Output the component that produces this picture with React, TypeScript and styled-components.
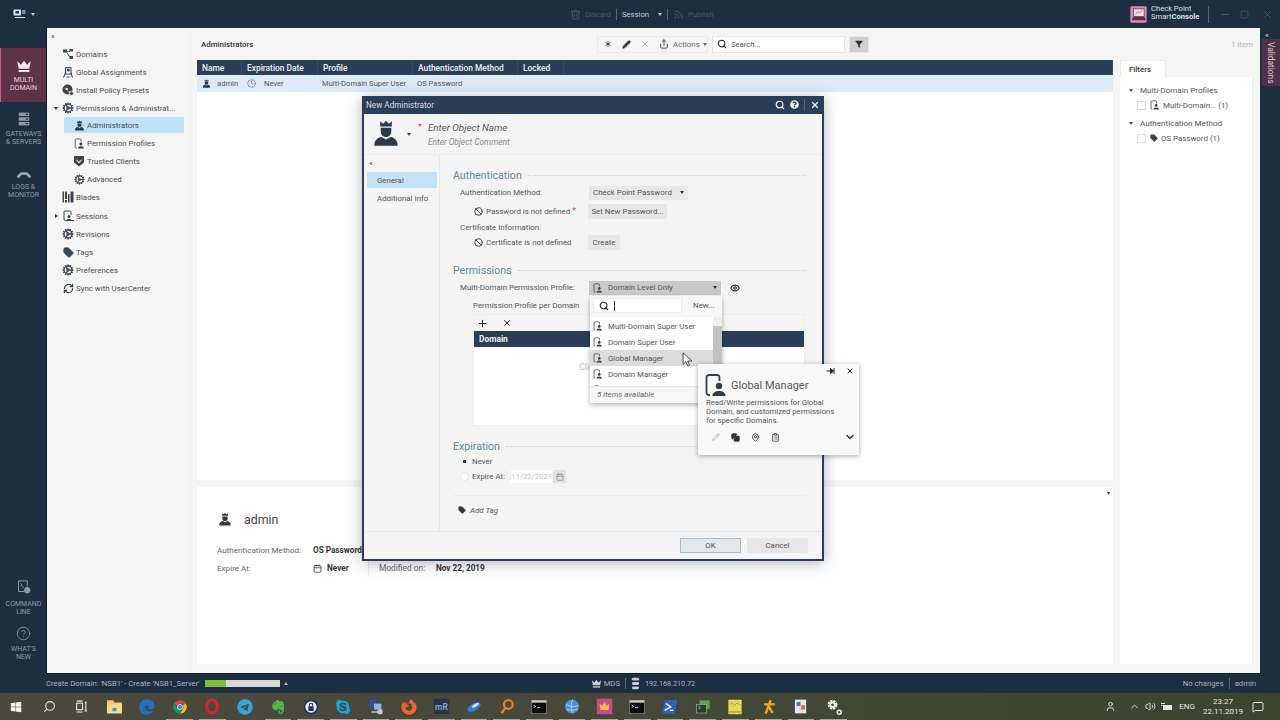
import React from "react";
import styled, { createGlobalStyle } from "styled-components";
import {
  Asterisk,
  Ban,
  Calendar,
  ChevronDown,
  ChevronUp,
  CircleHelp,
  ClipboardList,
  Clock,
  Cog,
  Copy,
  Eye,
  Filter,
  MapPin,
  MessageSquare,
  Minus,
  Pencil,
  Plus,
  RefreshCw,
  Rss,
  Search,
  Share,
  Square,
  Tag,
  Trash2,
  User,
  Volume2,
  X,
} from "lucide-react";
import {
  FaEdge,
  FaEvernote,
  FaFirefoxBrowser,
  FaQuestionCircle,
  FaSkype,
  FaTelegram,
  FaWindows,
} from "react-icons/fa";

const NAVY = "#1d2e40";
const HEADER = "#2b3e58";
const TEXT = "#4c4c4c";

const GlobalStyle = createGlobalStyle`
  html, body {
    margin: 0;
    padding: 0;
    background: ${NAVY};
  }
  * {
    box-sizing: border-box;
  }
`;

/* ---- drawn icons ---- */

type IconProps = { size?: number; color?: string };

const AdminIcon = ({ size = 12, color = "#2c3a48" }: IconProps) => (
  <svg width={size} height={size} viewBox="0 0 24 24" fill={color}>
    <path d="M7 2l2.5 2L12 1.5 14.5 4 17 2v4.5H7z" />
    <path d="M7.5 7.5h9V11a4.5 4.5 0 0 1-9 0z" />
    <path d="M2 23c0-5 3-7 6-7.5l4 2 4-2c3 .5 6 2.5 6 7.5z" />
  </svg>
);

const ProfileIcon = ({ size = 12, color = "#333f4b" }: IconProps) => (
  <svg width={size} height={size} viewBox="0 0 24 24" fill="none">
    <path d="M6 22H5A2.5 2.5 0 0 1 2.5 19.5v-15A2.5 2.5 0 0 1 5 2h8A2.5 2.5 0 0 1 15.5 4.5V8" stroke={color} strokeWidth="1.8" />
    <circle cx="15" cy="13" r="3.2" fill={color} />
    <path d="M8.5 23c0-3.4 2.6-5 6.5-5s6.5 1.6 6.5 5z" fill={color} />
  </svg>
);

const DomainsIcon = () => (
  <svg width="12" height="12" viewBox="0 0 24 24" fill="#3a4552">
    <rect x="2" y="3" width="8" height="6" />
    <rect x="15" y="2" width="7" height="5" />
    <rect x="15" y="16" width="7" height="6" />
    <path d="M9 6l7 0v1.6L9 7.6zM10 8l6 9-1.4 1L8.6 9z" />
  </svg>
);

const AssignIcon = () => (
  <svg width="12" height="13" viewBox="0 0 24 24" fill="none" stroke="#3a4552" strokeWidth="2.2">
    <rect x="7" y="2" width="11" height="13" rx="1" />
    <circle cx="12.5" cy="7" r="2" fill="#3a4552" />
    <path d="M7 13L3 22M18 13l3 9M9 21h6" />
  </svg>
);

const PolicyIcon = () => (
  <svg width="12" height="12" viewBox="0 0 24 24" fill="#3a4552">
    <circle cx="11" cy="11" r="10" />
    <path d="M7 7l5 2-1 4-4-2zM13 14l3 1-2 4z" fill="#f5f5f5" />
    <rect x="15" y="15" width="8" height="8" rx="4" stroke="#f5f5f5" strokeWidth="1.5" />
  </svg>
);

const BladesIcon = () => (
  <svg width="12" height="12" viewBox="0 0 24 24" fill="#3a4552">
    <rect x="1" y="1" width="3" height="22" />
    <rect x="6" y="1" width="4" height="15" />
    <rect x="6" y="18" width="4" height="5" />
    <rect x="12" y="6" width="3" height="17" />
    <rect x="17" y="1" width="6" height="22" />
  </svg>
);

const SessionsIcon = () => (
  <svg width="12" height="12" viewBox="0 0 24 24" fill="none">
    <path d="M6 20H4V4a2 2 0 0 1 2-2h10a2 2 0 0 1 2 2v6" stroke="#3a4552" strokeWidth="2" />
    <circle cx="14" cy="13" r="3" fill="#3a4552" />
    <path d="M6 22h18v-2h-5l-2-2h-6l-2 2H6z" fill="#3a4552" />
  </svg>
);

const ShieldIcon = () => (
  <svg width="12" height="12" viewBox="0 0 24 24" fill="#3a4552">
    <path d="M2 2h20v13l-10 8L2 15z" />
    <path d="M7 8l5 6 5-6v3l-5 6-5-6z" fill="#f5f5f5" />
  </svg>
);

const CrownIcon = ({ size = 16, color = "#f2e4ea" }: IconProps) => (
  <svg width={size} height={size} viewBox="0 0 24 24" fill={color}>
    <path d="M2 5l5.5 5L12 4l4.5 6L22 5l-2 11H4z" />
    <rect x="4" y="18" width="16" height="3" />
  </svg>
);

const ServersIcon = () => (
  <svg width="14" height="14" viewBox="0 0 24 24" fill="#8d99a5">
    <rect x="3" y="1" width="18" height="6" />
    <rect x="3" y="9" width="18" height="6" />
    <rect x="3" y="17" width="18" height="6" />
    <rect x="15" y="3" width="4" height="2" fill={NAVY} />
    <rect x="15" y="11" width="4" height="2" fill={NAVY} />
    <rect x="15" y="19" width="4" height="2" fill={NAVY} />
  </svg>
);

const GaugeIcon = () => (
  <svg width="16" height="12" viewBox="0 0 24 16" fill="none">
    <path d="M3 15a9.5 9.5 0 0 1 18 0" stroke="#9aa6b1" strokeWidth="4" />
  </svg>
);

const TerminalIcon = () => (
  <svg width="15" height="15" viewBox="0 0 24 24" fill="none" stroke="#8d99a5" strokeWidth="1.6">
    <path d="M13 20H4V3h14v9" />
    <path d="M7 7l3 2.5L7 12M10 13h3" />
    <circle cx="18" cy="18" r="4.5" fill="#8d99a5" />
  </svg>
);

const DbIcon = () => (
  <svg width="9" height="13" viewBox="0 0 12 18" fill="#c4ccd3">
    <rect x="1" y="1" width="10" height="4" rx="2" />
    <rect x="1" y="7" width="10" height="4" rx="2" />
    <rect x="1" y="13" width="10" height="4" rx="2" />
  </svg>
);

const LogoIcon = () => (
  <svg width="17" height="17" viewBox="0 0 24 24">
    <rect x="0.5" y="0.5" width="23" height="23" rx="2" fill="#d989b5" />
    <rect x="5" y="4" width="15" height="11" fill="#f6dce9" stroke="#5b2f4c" />
    <path d="M2 20l3-5h15l3 5z" fill="#5b2f4c" />
    <path d="M8 12l3-4 3 2 3-4" stroke="#b15a8d" fill="none" />
  </svg>
);

const DesktopIcon = () => (
  <svg width="13" height="12" viewBox="0 0 26 24" fill="#dfe5ea">
    <rect x="1" y="3" width="15" height="12" rx="1.5" />
    <rect x="5" y="6" width="7" height="5" fill={NAVY} />
    <rect x="18" y="5" width="7" height="2" />
    <rect x="18" y="9" width="7" height="2" />
    <rect x="4" y="18" width="20" height="2" />
  </svg>
);

const CursorIcon = () => (
  <svg width="11" height="15" viewBox="0 0 12 17">
    <path d="M1 1v13l3.2-3 2.2 5 2-1-2.2-4.8H11z" fill="#fff" stroke="#222" strokeWidth="0.9" />
  </svg>
);

const PinSideIcon = () => (
  <svg width="9" height="8" viewBox="0 0 18 16" fill="none" stroke="#222" strokeWidth="2">
    <path d="M1 8h8M16 2v12" />
    <path d="M9 3l6 5-6 5z" fill="#222" />
  </svg>
);

const NetTrayIcon = () => (
  <svg width="11" height="10" viewBox="0 0 22 20" fill="#e6e6e0">
    <rect x="4" y="6" width="18" height="10" />
    <rect x="0" y="2" width="8" height="2" />
    <rect x="0" y="6" width="3" height="2" />
  </svg>
);

const ChromeIcon = () => (
  <svg width="16" height="16" viewBox="0 0 24 24">
    <path d="M12 2a10 10 0 0 1 8.7 5H12a5 5 0 0 0-4.6 3L3.8 6A10 10 0 0 1 12 2z" fill="#db4437" />
    <path d="M20.7 7A10 10 0 0 1 12 22l4.3-7.5A5 5 0 0 0 16.4 9z" fill="#f4c20d" />
    <path d="M12 22A10 10 0 0 1 3.8 6l4.3 7.6a5 5 0 0 0 5.4 3z" fill="#0f9d58" />
    <circle cx="12" cy="12" r="4" fill="#4285f4" stroke="#fff" />
  </svg>
);

const OperaIcon = () => (
  <svg width="16" height="17" viewBox="0 0 24 24" fill="none">
    <ellipse cx="12" cy="12" rx="8" ry="10" stroke="#d4262c" strokeWidth="5" />
  </svg>
);

const LockAppIcon = () => (
  <svg width="16" height="16" viewBox="0 0 24 24">
    <circle cx="12" cy="12" r="11" fill="#1d2f66" />
    <circle cx="12" cy="12" r="8.5" fill="#e6e8f2" />
    <rect x="8" y="11" width="8" height="7" rx="1" fill="#1d2f66" />
    <path d="M9.5 11V9a2.5 2.5 0 0 1 5 0v2" stroke="#1d2f66" strokeWidth="1.6" fill="none" />
  </svg>
);

const NetAppIcon = () => (
  <svg width="16" height="16" viewBox="0 0 24 24">
    <rect x="3" y="1" width="9" height="11" fill="#2d4fb8" />
    <rect x="9" y="7" width="11" height="9" fill="#8fb3e6" />
    <rect x="5" y="18" width="14" height="3" fill="#9aa3ad" />
    <circle cx="18" cy="19" r="4" fill="#c5ccd3" />
  </svg>
);

const MrIcon = () => (
  <svg width="17" height="17" viewBox="0 0 24 24">
    <rect x="1" y="1" width="22" height="22" fill="#2b3446" />
    <text x="12" y="16.5" fontSize="12" fontFamily="Roboto" fontWeight="700" fill="#7ea3c9" textAnchor="middle">mR</text>
  </svg>
);

const BlueSwooshIcon = () => (
  <svg width="16" height="16" viewBox="0 0 24 24">
    <ellipse cx="12" cy="12" rx="11" ry="5.5" transform="rotate(-30 12 12)" fill="#2d7fd8" />
    <ellipse cx="14" cy="9.5" rx="6" ry="2" transform="rotate(-30 14 9.5)" fill="#d8ecfb" />
  </svg>
);

const OrangeSearchIcon = () => (
  <svg width="16" height="17" viewBox="0 0 24 24" fill="none" stroke="#e9851d" strokeWidth="3.4">
    <circle cx="14" cy="9" r="6.5" />
    <path d="M9.5 14L4 22" />
  </svg>
);

const ConsoleIcon = () => (
  <svg width="16" height="16" viewBox="0 0 24 24">
    <rect x="1" y="2" width="22" height="20" fill="#0c0c0c" stroke="#8a8a8a" />
    <rect x="1" y="2" width="22" height="3.5" fill="#cfcfcf" />
    <path d="M4 9l3 2-3 2M9 13h5" stroke="#e6e6e6" strokeWidth="1.3" fill="none" />
  </svg>
);

const GlobeAppIcon = () => (
  <svg width="16" height="17" viewBox="0 0 24 24" fill="none">
    <circle cx="12" cy="12" r="10.5" fill="#4d8ed6" />
    <path d="M3 9c5 3 11 4 18 2M4 16c5 2 10 2 16 0M13 2c-3 5-3 13 0 20" stroke="#bcdcf7" strokeWidth="1.3" />
  </svg>
);

const SmartConsoleIcon = () => (
  <svg width="17" height="17" viewBox="0 0 24 24">
    <rect x="1" y="1" width="22" height="22" fill="#c94d85" />
    <path d="M5 8l4 3 3-5 3 5 4-3-1.5 9h-11z" fill="#f2c14a" />
  </svg>
);

const PowerShellIcon = () => (
  <svg width="16" height="16" viewBox="0 0 24 24">
    <path d="M4 2h19l-4 20H0z" fill="#2a66c0" />
    <path d="M6 7l7 5-9 5M12 17h5" stroke="#fff" strokeWidth="2" fill="none" />
  </svg>
);

const RemoteIcon = () => (
  <svg width="16" height="16" viewBox="0 0 24 24">
    <rect x="7" y="2" width="15" height="13" fill="#5f9e4c" />
    <rect x="2" y="8" width="15" height="13" fill="#2d3a33" stroke="#9ac48a" />
    <path d="M5 11l3 2-3 2" stroke="#e5e5e5" fill="none" />
  </svg>
);

const NoteIcon = () => (
  <svg width="16" height="18" viewBox="0 0 24 24">
    <rect x="2" y="1" width="20" height="22" rx="1" fill="#e6d95c" />
    <path d="M4 9l3-3 4 4 4-4 5 3" stroke="#8a7f20" fill="none" />
    <rect x="2" y="18" width="20" height="3" fill="#bfb13a" />
  </svg>
);

const RunnerIcon = () => (
  <svg width="17" height="17" viewBox="0 0 24 24" fill="none" stroke="#f0a81e" strokeWidth="3.5">
    <path d="M6 9h15M15 3L8 22M12 12l6 9" />
  </svg>
);

const DocIcon = () => (
  <svg width="15" height="17" viewBox="0 0 24 24">
    <rect x="3" y="1" width="18" height="22" fill="#dfe6f2" />
    <rect x="6" y="5" width="6" height="6" fill="#3f6fc0" />
    <rect x="13" y="10" width="6" height="7" fill="#d56a3b" />
  </svg>
);

const GearsIcon = () => (
  <svg width="18" height="18" viewBox="0 0 24 24" fill="none" stroke="#eef0ea">
    <circle cx="10" cy="9" r="5" strokeWidth="3.2" strokeDasharray="3 1" />
    <circle cx="10" cy="9" r="3" strokeWidth="2.4" />
    <circle cx="19" cy="19" r="2.7" strokeWidth="2" />
  </svg>
);

const FolderIcon = () => (
  <svg width="17" height="15" viewBox="0 0 24 22">
    <path d="M1 2h9l2 3h11v16H1z" fill="#f2cd5c" />
    <rect x="1" y="8" width="22" height="13" fill="#f7dc8b" />
    <rect x="9" y="13" width="6" height="5" fill="#3f9bd9" />
  </svg>
);

const TaskViewIcon = () => (
  <svg width="13" height="13" viewBox="0 0 24 24" fill="none" stroke="#e6e6e0" strokeWidth="2">
    <rect x="3" y="6" width="11" height="12" />
    <path d="M3 2h11M3 22h11M20 4v16M18 4h4M18 20h4" />
  </svg>
);

/* ---- page shell ---- */

const Shell = styled.div`
  position: relative;
  width: 1280px;
  height: 720px;
  overflow: hidden;
  display: grid;
  grid-template-columns: 46px 1214px 20px;
  grid-template-rows: 28px 646px 19px 27px;
  background: ${NAVY};
  font-family: Roboto, "Open Sans", sans-serif;
  font-size: 7.9px;
  color: ${TEXT};
`;

const TopBar = styled.header`
  grid-column: 1 / -1;
  display: flex;
  align-items: center;
  padding: 0 7px 0 13px;
  color: #c4ccd3;
`;

const MenuCaret = styled.span<{ $gap?: number }>`
  width: 0;
  height: 0;
  margin-left: ${({ $gap }) => $gap ?? 4}px;
  border-left: 2.5px solid transparent;
  border-right: 2.5px solid transparent;
  border-top: 3px solid currentColor;
`;

const ActionGroup = styled.div`
  display: flex;
  align-items: center;
  margin-left: 535px;
  height: 100%;
`;

const ActionItem = styled.span<{ $dim?: boolean }>`
  display: flex;
  align-items: center;
  gap: 4px;
  color: ${({ $dim }) => ($dim ? "#46586a" : "#c3cbd2")};
  font-size: 7.7px;
`;

const BarDivider = styled.span<{ $h?: number; $mx?: number }>`
  width: 1px;
  height: ${({ $h }) => $h ?? 11}px;
  margin: 0 ${({ $mx }) => $mx ?? 6}px;
  background: #55677a;
`;

const Brand = styled.div`
  display: flex;
  align-items: center;
  margin-left: auto;
`;

const BrandName = styled.div`
  display: flex;
  flex-direction: column;
  margin: -2px 0 0 4px;
  color: #dbe1e6;
  line-height: 8px;
  width: 56px;
`;

const BrandLine = styled.span`
  white-space: nowrap;
  font-size: 7.6px;
  line-height: 8px;
  b {
    font-weight: 700;
  }
`;

const WindowButtons = styled.div`
  display: flex;
  align-items: center;
  gap: 9px;
  margin-left: 10px;
  color: #4a5c6e;
`;

const CloseSlot = styled.span`
  display: flex;
  margin-left: 4px;
`;

/* ---- left navigation ---- */

const SideNav = styled.nav`
  display: flex;
  flex-direction: column;
  padding: 20px 0 13px;
`;

const NavItem = styled.div<{ $active?: boolean; $h?: number; $pt?: number; $gap?: number }>`
  height: ${({ $h }) => $h ?? 53}px;
  display: flex;
  flex-direction: column;
  align-items: center;
  padding-top: ${({ $pt }) => $pt ?? 10}px;
  gap: ${({ $gap }) => $gap ?? 4}px;
  background: ${({ $active }) => ($active ? "#5e3249" : "transparent")};
  border-left: 1px solid ${({ $active }) => ($active ? "#c2668f" : "transparent")};
`;

const NavLabel = styled.span<{ $active?: boolean }>`
  font-size: 7px;
  line-height: 8px;
  text-align: center;
  text-transform: uppercase;
  color: ${({ $active }) => ($active ? "#e6d8df" : "#8f9ba6")};
`;

const NavFoot = styled.div`
  margin-top: auto;
  display: flex;
  flex-direction: column;
`;

/* ---- workspace ---- */

const Workspace = styled.main`
  display: grid;
  grid-template-columns: 144px 929px 1fr;
  grid-template-rows: 1fr;
  background: #f5f5f5;
  border: 1px solid #0e1a26;
  border-top: 0;
  border-right: 0;
`;

const Tree = styled.aside`
  display: flex;
  flex-direction: column;
  border-right: 1px solid #efefef;
`;

const CollapseMark = styled.div<{ $pad?: number; $h?: number; $color?: string }>`
  height: ${({ $h }) => $h ?? 17}px;
  padding-left: ${({ $pad }) => $pad ?? 4}px;
  font-size: 8px;
  line-height: ${({ $h }) => $h ?? 17}px;
  color: ${({ $color }) => $color ?? "#444"};
`;

const TreeRow = styled.div<{ $child?: boolean; $selected?: boolean; $mt?: number }>`
  display: flex;
  align-items: center;
  margin-left: ${({ $child }) => ($child ? 17 : 5)}px;
  width: ${({ $child }) => ($child ? "120px" : "auto")};
  padding-left: ${({ $child }) => ($child ? 9 : 0)}px;
  gap: 2px;
  white-space: nowrap;
  background: ${({ $selected }) => ($selected ? "#bfe1f7" : "transparent")};
  color: ${TEXT};
  height: ${({ $selected }) => ($selected ? 16 : 18)}px;
  margin-top: ${({ $mt }) => $mt ?? 0}px;
  margin-bottom: ${({ $selected }) => ($selected ? 1 : 0)}px;
`;

const CaretSlot = styled.span`
  width: 8px;
  display: flex;
  justify-content: center;
  color: #333;
`;

const SideCaret = styled.span`
  width: 0;
  height: 0;
  border-top: 2.5px solid transparent;
  border-bottom: 2.5px solid transparent;
  border-left: 3px solid #333;
`;

const IconSlot = styled.span`
  width: 12px;
  display: flex;
  justify-content: center;
  align-items: center;
  color: #3a4552;
`;

const Center = styled.section`
  display: flex;
  flex-direction: column;
  padding: 0 7px 9px 6px;
`;

const TitleRow = styled.div`
  height: 32px;
  flex: none;
  display: flex;
  align-items: center;
  gap: 4px;
`;

const PageTitle = styled.h1`
  width: 396px;
  margin: 0;
  padding-left: 4px;
  font-size: 7.9px;
  font-weight: 500;
  color: #333;
`;

const ToolGroup = styled.div`
  width: 111px;
  height: 17px;
  display: flex;
  align-items: center;
  gap: 9px;
  padding-left: 5px;
  border: 1px solid #eaeaea;
  color: #333;
`;

const ActionsLabel = styled.span`
  display: flex;
  align-items: center;
  margin-left: -5px;
  color: #666;
`;

const SearchBox = styled.div`
  width: 133px;
  height: 17px;
  display: flex;
  align-items: center;
  gap: 4px;
  padding-left: 4px;
  background: #fff;
  border: 1px solid #e6e6e6;
  font-style: italic;
  color: #555;
`;

const FilterButton = styled.div`
  width: 20px;
  height: 17px;
  display: flex;
  align-items: center;
  justify-content: center;
  border: 1px solid #e9e9e9;
  background: #cdcfd0;
  color: #333;
`;

const TablePane = styled.div`
  height: 420px;
  flex: none;
  display: flex;
  flex-direction: column;
  background: #fff;
`;

const HeaderRow = styled.div`
  height: 15px;
  flex: none;
  display: grid;
  grid-template-columns: 45px 76px 95px 105px 46px 1fr;
  background: ${HEADER};
`;

const HeaderCell = styled.div`
  display: flex;
  align-items: center;
  padding-left: 5px;
  color: #eef1f4;
  font-size: 8.4px;
  font-weight: 500;
  border-right: 1px solid #36496a;
  white-space: nowrap;
`;

const DataRow = styled.div`
  height: 17px;
  flex: none;
  display: grid;
  grid-template-columns: 45px 76px 95px 105px 46px 1fr;
  background: #dcebf7;
  font-size: 7.6px;
`;

const DataCell = styled.div<{ $pad?: number; $gap?: number }>`
  display: flex;
  align-items: center;
  gap: ${({ $gap }) => $gap ?? 6}px;
  padding-left: ${({ $pad }) => $pad ?? 5}px;
  white-space: nowrap;
  color: #555;
`;

const DetailPane = styled.div`
  flex: 1;
  margin-top: 7px;
  padding: 22px 0 0 20px;
  background: #fff;
  position: relative;
`;

const PaneMenu = styled.span`
  position: absolute;
  top: 2px;
  right: 3px;
  font-size: 6px;
  color: #333;
`;

const DetailHead = styled.div`
  display: flex;
  align-items: center;
  gap: 12px;
  padding-left: 1px;
  height: 20px;
  font-size: 12.4px;
  color: #444;
`;

const DetailGrid = styled.div`
  display: grid;
  grid-template-columns: 96px 55px 68px auto;
  grid-auto-rows: 18px;
  margin-top: 12px;
  align-items: center;
  justify-content: start;
  font-size: 8.1px;
`;

const DetailValue = styled.span`
  display: flex;
  align-items: center;
  gap: 5px;
  font-size: 8.2px;
  font-weight: 700;
  color: #333;
  white-space: nowrap;
`;

const DetailMuted = styled.span<{ $sep?: boolean }>`
  color: #666;
  white-space: nowrap;
  height: 100%;
  display: flex;
  align-items: center;
  ${({ $sep }) => ($sep ? "border-left: 1px solid #eee; padding-left: 10px; font-size: 8.4px;" : "")}
`;

const FilterSide = styled.aside`
  display: flex;
  flex-direction: column;
  padding-right: 7px;
`;

const ItemCount = styled.div`
  height: 32px;
  flex: none;
  display: flex;
  align-items: center;
  justify-content: flex-end;
  color: #b4b4b4;
`;

const FilterTab = styled.div`
  width: 46px;
  height: 17px;
  display: flex;
  align-items: center;
  padding-left: 8px;
  background: #fff;
  border: 1px solid #eaeaea;
  border-bottom: 0;
  font-weight: 500;
  color: #333;
`;

const FilterBody = styled.div`
  flex: 1;
  margin-bottom: 9px;
  padding-top: 5px;
  background: #fff;
  border-right: 1px solid #eee;
`;

const FilterGroup = styled.div`
  height: 16px;
  display: flex;
  align-items: center;
  padding-left: 9px;
  gap: 7px;
  font-size: 8.1px;
  color: #555;
  white-space: nowrap;
`;

const FilterItem = styled.div`
  height: 14px;
  display: flex;
  align-items: center;
  gap: 3px;
  padding-left: 17px;
  margin-bottom: 3px;
  color: #555;
  white-space: nowrap;
`;

const Check = styled.span`
  width: 9px;
  height: 9px;
  margin-right: 1px;
  background: #fff;
  border: 1px solid #dcdcdc;
`;

const RightStrip = styled.aside`
  display: flex;
  flex-direction: column;
  padding-left: 2px;
`;

const ValidationTab = styled.div`
  width: 18px;
  height: 47px;
  margin-top: -5px;
  display: flex;
  align-items: center;
  justify-content: center;
  writing-mode: vertical-rl;
  background: #4f3149;
  color: #d4c8d0;
  font-size: 8.4px;
`;

/* ---- status bar ---- */

const StatusBar = styled.footer`
  grid-column: 1 / -1;
  display: flex;
  align-items: center;
  padding: 0 24px 0 46px;
  color: #a8b3bc;
  font-size: 7.7px;
  white-space: nowrap;
`;

const Progress = styled.div`
  width: 75px;
  height: 7px;
  margin-left: 5px;
  background: #d8d8d8;
`;

const ProgressFill = styled.div`
  height: 100%;
  background: #7cbf3f;
`;

const StatusRight = styled.div`
  display: flex;
  align-items: center;
  margin-left: auto;
`;

const StatusMid = styled.div`
  display: flex;
  align-items: center;
  gap: 2px;
  margin-left: 303px;
`;

const IpText = styled.span`
  margin-left: 3px;
  font-size: 7.2px;
`;

const UpCaret = styled(MenuCaret)`
  transform: rotate(180deg);
`;

/* ---- taskbar ---- */

const Taskbar = styled.div`
  grid-column: 1 / -1;
  display: flex;
  align-items: center;
  background: linear-gradient(90deg, #4a493e 0%, #47483a 45%, #3e4731 75%, #3a4530 100%);
`;

const TaskSlot = styled.div<{ $running?: boolean }>`
  position: relative;
  width: 32.7px;
  height: 100%;
  display: flex;
  align-items: center;
  justify-content: center;
  color: #e6e6e0;
  &::after {
    content: "";
    position: absolute;
    left: 3px;
    right: 3px;
    bottom: 0;
    height: 1.5px;
    background: ${({ $running }) => ($running ? "#a8a89f" : "transparent")};
  }
`;

const Tray = styled.div`
  display: flex;
  align-items: center;
  margin-left: auto;
  gap: 5px;
  padding-right: 16px;
  color: #e6e6e0;
  font-size: 8px;
`;

const PeopleSlot = styled.span`
  display: flex;
  margin-right: 8px;
`;

const EngLabel = styled.span`
  margin-left: 2px;
`;

const ClockText = styled.div`
  display: flex;
  flex-direction: column;
  align-items: center;
  width: 36px;
  line-height: 10px;
  margin: 0 6px 0 5px;
`;

/* ---- dialog ---- */

const Dialog = styled.div`
  position: absolute;
  left: 362px;
  top: 96px;
  width: 462px;
  height: 465px;
  display: flex;
  flex-direction: column;
  background: #f4f4f4;
  border: 2px solid ${HEADER};
  box-shadow: 0 2px 14px rgba(30, 40, 60, 0.35);
`;

const DialogTitle = styled.div`
  height: 16px;
  flex: none;
  display: flex;
  align-items: center;
  padding: 0 2px 3px 2px;
  background: ${HEADER};
  color: #d7dde3;
  font-size: 8.2px;
`;

const TitleIcons = styled.div`
  display: flex;
  align-items: center;
  gap: 5px;
  margin-left: auto;
  color: #eef1f4;
`;

const DialogHead = styled.div`
  height: 41px;
  flex: none;
  display: flex;
  padding: 5px 0 0 8px;
  border-bottom: 1px solid #ececec;
`;

const AvatarCaret = styled.span`
  margin: 17px 0 0 7px;
  color: #444;
`;

const Required = styled.span`
  color: #d0546a;
  font-size: 9px;
`;

const HeadStar = styled(Required)`
  margin: 3px 0 0 7px;
`;

const NameBlock = styled.div`
  margin: 1px 0 0 6px;
  display: flex;
  flex-direction: column;
  font-style: italic;
`;

const NameInput = styled.span`
  height: 16px;
  line-height: 16px;
  font-size: 9.8px;
  color: #555;
`;

const CommentInput = styled.span`
  margin-top: -1px;
  line-height: 14px;
  font-size: 8.4px;
  color: #8a8a8a;
`;

const DialogBody = styled.div`
  flex: 1;
  display: flex;
  min-height: 0;
`;

const DialogSide = styled.div`
  width: 76px;
  flex: none;
  padding-left: 3px;
  padding-right: 2px;
  border-right: 1px solid #e8e8e8;
`;

const SideMark = styled(CollapseMark)`
  margin-left: -2px;
`;

const SideTab = styled.div<{ $selected?: boolean }>`
  height: 16px;
  display: flex;
  align-items: center;
  padding-left: 10px;
  margin-bottom: 2px;
  white-space: nowrap;
  background: ${({ $selected }) => ($selected ? "#c3e3f8" : "transparent")};
  color: #555;
`;

const Form = styled.div`
  flex: 1;
  padding: 12px 16px 0 13px;
  min-width: 0;
`;

const SectionTitle = styled.div<{ $mt?: number }>`
  height: 16px;
  display: flex;
  align-items: center;
  margin-top: ${({ $mt }) => $mt ?? 0}px;
  color: #5a85a8;
  font-size: 10.6px;
  &::after {
    content: "";
    flex: 1;
    margin-left: 6px;
    border-bottom: 1px dotted #d4d4d4;
  }
`;

const FormRow = styled.div<{ $h: number; $indent?: number }>`
  height: ${({ $h }) => $h}px;
  display: flex;
  align-items: center;
  padding-left: ${({ $indent }) => $indent ?? 7}px;
  white-space: nowrap;
  color: #555;
`;

const FieldLabel = styled.span<{ $w?: number }>`
  width: ${({ $w }) => ($w ? `${$w}px` : "auto")};
  flex: none;
  display: flex;
  align-items: center;
  gap: 3px;
`;

const SelectBox = styled.div<{ $w: number; $open?: boolean }>`
  width: ${({ $w }) => $w}px;
  height: 14px;
  display: flex;
  align-items: center;
  gap: 5px;
  padding: 0 4px;
  background: ${({ $open }) => ($open ? "#c9c9c9" : "#e7e7e7")};
  color: #555;
`;

const SelectCaret = styled(MenuCaret)`
  margin-left: auto;
  color: #333;
`;

const ActionButton = styled.div<{ $w: number; $h?: number }>`
  width: ${({ $w }) => $w}px;
  height: ${({ $h }) => $h ?? 15}px;
  display: flex;
  align-items: center;
  justify-content: center;
  background: #e7e7e7;
  color: #555;
`;

const EyeSlot = styled.span`
  margin-left: 9px;
  display: flex;
  color: #333;
`;

const DomainBox = styled.div`
  height: 112px;
  margin: 1px 1px 0 20px;
  background: #fff;
  display: flex;
  flex-direction: column;
  border: 1px solid #ededed;
`;

const DomainTools = styled.div`
  height: 16px;
  flex: none;
  display: flex;
  align-items: center;
  gap: 14px;
  padding-left: 3px;
  background: #f4f4f4;
  color: #222;
`;

const DomainHeader = styled.div`
  height: 16px;
  flex: none;
  display: flex;
  align-items: center;
  padding-left: 5px;
  background: ${HEADER};
  color: #eef1f4;
  font-size: 8.4px;
  font-weight: 700;
`;

const EmptyHint = styled.div`
  padding: 15px 0 0 105px;
  color: #c4c4c4;
  font-size: 9px;
`;

const Radio = styled.span<{ $on?: boolean }>`
  width: 9px;
  height: 9px;
  border-radius: 50%;
  margin-right: 3px;
  background: ${({ $on }) =>
    $on ? "radial-gradient(circle, #333 0 1.6px, transparent 2px)" : "#fff"};
  border: 1px solid ${({ $on }) => ($on ? "transparent" : "#e3e3e3")};
`;

const DateInput = styled.span`
  width: 41px;
  height: 13px;
  margin-left: 6px;
  display: flex;
  align-items: center;
  justify-content: center;
  background: #fff;
  color: #c4c4c4;
  font-size: 7.6px;
`;

const DateButton = styled.span`
  width: 13px;
  height: 13px;
  margin-left: 1px;
  display: flex;
  align-items: center;
  justify-content: center;
  background: #e2e2e2;
  color: #888;
`;

const FormRule = styled.div`
  margin-top: 11px;
  border-top: 1px solid #ececec;
`;

const TagRow = styled.div`
  height: 16px;
  margin-top: 6px;
  display: flex;
  align-items: center;
  gap: 4px;
  padding-left: 5px;
  font-style: italic;
  color: #555;
`;

const DialogFoot = styled.div`
  height: 28px;
  flex: none;
  display: flex;
  align-items: flex-start;
  justify-content: flex-end;
  gap: 6px;
  padding: 6px 14px 0 0;
  border-top: 1px solid #e8e8e8;
`;

const OkButton = styled(ActionButton)`
  background: #e3e8eb;
  border: 1px solid #a5bccb;
`;

/* ---- dropdown over the form ---- */

const Dropdown = styled.div`
  position: absolute;
  left: 226px;
  top: 198px;
  width: 132px;
  height: 107px;
  display: flex;
  flex-direction: column;
  background: #f7f7f7;
  box-shadow: 0 2px 5px rgba(0, 0, 0, 0.3);
`;

const DropSearch = styled.div`
  height: 21px;
  flex: none;
  display: flex;
  align-items: flex-start;
  padding: 2px 0 0 3px;
`;

const DropInput = styled.div`
  width: 89px;
  height: 15px;
  display: flex;
  align-items: center;
  gap: 5px;
  padding-left: 5px;
  background: #fff;
  border: 1px solid #ececec;
  color: #333;
`;

const TextCaret = styled.span`
  width: 1px;
  height: 10px;
  background: #333;
`;

const NewLink = styled.span`
  margin-left: 11px;
  line-height: 15px;
  color: #555;
`;

const DropList = styled.div`
  flex: 1;
  display: flex;
  min-height: 0;
  overflow: hidden;
  background: #fff;
`;

const DropRows = styled.div`
  flex: 1;
  padding-top: 1px;
`;

const DropRow = styled.div<{ $hover?: boolean }>`
  height: 16px;
  flex: none;
  display: flex;
  align-items: center;
  gap: 5px;
  padding-left: 3px;
  white-space: nowrap;
  background: ${({ $hover }) => ($hover ? "#dcdcdc" : "transparent")};
  color: #555;
`;

const ScrollTrack = styled.div`
  width: 9px;
  flex: none;
  padding-top: 9px;
  background: #efefef;
`;

const ScrollThumb = styled.div`
  height: 44px;
  background: #c2c2c2;
`;

const DropFoot = styled.div`
  height: 17px;
  flex: none;
  display: flex;
  align-items: center;
  padding: 0 0 2px 7px;
  font-style: italic;
  border-top: 1px solid #e6e6e6;
  color: #666;
`;

const Pointer = styled.div`
  position: absolute;
  left: 318px;
  top: 254px;
  display: flex;
`;

/* ---- profile popover ---- */

const Popover = styled.div`
  position: absolute;
  left: 334px;
  top: 266px;
  width: 161px;
  height: 91px;
  padding: 3px 8px 0;
  display: flex;
  flex-direction: column;
  background: #f8f8f8;
  box-shadow: 0 1px 5px rgba(0, 0, 0, 0.35);
`;

const PopControls = styled.div`
  display: flex;
  justify-content: flex-end;
  align-items: center;
  gap: 11px;
  height: 8px;
  margin-right: -3px;
  color: #222;
`;

const PopHead = styled.div`
  height: 22px;
  margin-top: -1px;
  display: flex;
  align-items: center;
  gap: 3px;
  margin-left: -2px;
  font-size: 11px;
  color: #555;
`;

const PopText = styled.p`
  margin: 2px 0 0;
  font-size: 7.7px;
  line-height: 9px;
  color: #555;
`;

const PopTools = styled.div`
  display: flex;
  align-items: center;
  gap: 11px;
  height: 14px;
  margin-top: 5px;
  padding-left: 6px;
  color: #333;
`;

const PopChevron = styled.span`
  margin: 0 -5px 0 auto;
  display: flex;
  color: #222;
`;

/* ---- data ---- */

const treeRows = [
  { label: "Domains", icon: <DomainsIcon /> },
  { label: "Global Assignments", icon: <AssignIcon /> },
  { label: "Install Policy Presets", icon: <PolicyIcon /> },
  { label: "Permissions & Administrat...", icon: <Cog size={12} strokeWidth={2.6} />, caret: "down" },
  { label: "Administrators", icon: <AdminIcon size={11} />, child: true, selected: true },
  { label: "Permission Profiles", icon: <ProfileIcon size={11} />, child: true },
  { label: "Trusted Clients", icon: <ShieldIcon />, child: true },
  { label: "Advanced", icon: <Cog size={11} strokeWidth={2.6} />, child: true },
  { label: "Blades", icon: <BladesIcon /> },
  { label: "Sessions", icon: <SessionsIcon />, caret: "right", mt: 1 },
  { label: "Revisions", icon: <Cog size={12} strokeWidth={2.6} /> },
  { label: "Tags", icon: <Tag size={11} fill="#3a4552" /> },
  { label: "Preferences", icon: <Cog size={12} strokeWidth={2.6} /> },
  { label: "Sync with UserCenter", icon: <RefreshCw size={11} strokeWidth={2.6} /> },
];

const taskApps = [
  { icon: <FaWindows size={12} color="#f2f2ee" /> },
  { icon: <Search size={13} color="#e6e6e0" style={{ transform: "scaleX(-1)" }} /> },
  { icon: <TaskViewIcon /> },
  { icon: <FolderIcon /> },
  { icon: <FaEdge size={16} color="#1a73c9" /> },
  { icon: <ChromeIcon />, running: true },
  { icon: <OperaIcon />, running: true },
  { icon: <FaTelegram size={16} color="#37a4dd" /> },
  { icon: <FaEvernote size={16} color="#4fb946" />, running: true },
  { icon: <LockAppIcon />, running: true },
  { icon: <FaSkype size={16} color="#1aa3e0" />, running: true },
  { icon: <NetAppIcon />, running: true },
  { icon: <FaFirefoxBrowser size={16} color="#f0662a" />, running: true },
  { icon: <MrIcon />, running: true },
  { icon: <BlueSwooshIcon />, running: true },
  { icon: <OrangeSearchIcon />, running: true },
  { icon: <ConsoleIcon />, running: true },
  { icon: <GlobeAppIcon />, running: true },
  { icon: <SmartConsoleIcon />, running: true },
  { icon: <ConsoleIcon />, running: true },
  { icon: <PowerShellIcon />, running: true },
  { icon: <RemoteIcon />, running: true },
  { icon: <NoteIcon />, running: true },
  { icon: <RunnerIcon />, running: true },
  { icon: <DocIcon />, running: true },
  { icon: <GearsIcon />, running: true },
];

const profiles = ["Multi-Domain Super User", "Domain Super User", "Global Manager", "Domain Manager", ""];

export default function App() {
  return (
    <Shell>
      <GlobalStyle />
      <TopBar>
        <DesktopIcon />
        <MenuCaret $gap={5} />
        <ActionGroup>
          <ActionItem $dim>
            <Trash2 size={11} />
            Discard
          </ActionItem>
          <BarDivider $mx={5} />
          <ActionItem>
            Session
            <MenuCaret $gap={5} />
          </ActionItem>
          <BarDivider $mx={5} />
          <ActionItem $dim>
            <Rss size={11} />
            Publish
          </ActionItem>
        </ActionGroup>
        <Brand>
          <LogoIcon />
          <BrandName>
            <BrandLine>Check Point</BrandLine>
            <BrandLine>
              Smart<b>Console</b>
            </BrandLine>
          </BrandName>
          <BarDivider $h={17} $mx={1} />
          <WindowButtons>
            <Minus size={11} />
            <Square size={9} />
            <CloseSlot>
              <X size={11} />
            </CloseSlot>
          </WindowButtons>
        </Brand>
      </TopBar>

      <SideNav>
        <NavItem $active $h={54} $gap={2}>
          <CrownIcon />
          <NavLabel $active>
            Multi
            <br />
            Domain
          </NavLabel>
        </NavItem>
        <NavItem>
          <ServersIcon />
          <NavLabel>
            Gateways
            <br />& Servers
          </NavLabel>
        </NavItem>
        <NavItem $pt={12}>
          <GaugeIcon />
          <NavLabel>
            Logs &
            <br />
            Monitor
          </NavLabel>
        </NavItem>
        <NavFoot>
          <NavItem $h={47} $pt={9} $gap={6}>
            <TerminalIcon />
            <NavLabel>
              Command
              <br />
              Line
            </NavLabel>
          </NavItem>
          <NavItem $h={44} $pt={9} $gap={4}>
            <CircleHelp size={15} color="#8d99a5" strokeWidth={1.4} />
            <NavLabel>
              What's
              <br />
              New
            </NavLabel>
          </NavItem>
        </NavFoot>
      </SideNav>

      <Workspace>
        <Tree>
          <CollapseMark>«</CollapseMark>
          {treeRows.map((row) => (
            <TreeRow key={row.label} $child={row.child} $selected={row.selected} $mt={row.mt}>
              {!row.child && (
                <CaretSlot>
                  {row.caret === "down" && <MenuCaret $gap={0} />}
                  {row.caret === "right" && <SideCaret />}
                </CaretSlot>
              )}
              <IconSlot>{row.icon}</IconSlot>
              <span>{row.label}</span>
            </TreeRow>
          ))}
        </Tree>

        <Center>
          <TitleRow>
            <PageTitle>Administrators</PageTitle>
            <ToolGroup>
              <Asterisk size={10} />
              <Pencil size={9} fill="#333" />
              <X size={10} color="#aaa" />
              <Share size={10} />
              <ActionsLabel>
                Actions
                <MenuCaret $gap={3} />
              </ActionsLabel>
            </ToolGroup>
            <SearchBox>
              <Search size={10} color="#222" strokeWidth={2.6} />
              Search...
            </SearchBox>
            <FilterButton>
              <Filter size={8} fill="#333" />
            </FilterButton>
          </TitleRow>
          <TablePane>
            <HeaderRow>
              <HeaderCell>Name</HeaderCell>
              <HeaderCell>Expiration Date</HeaderCell>
              <HeaderCell>Profile</HeaderCell>
              <HeaderCell>Authentication Method</HeaderCell>
              <HeaderCell>Locked</HeaderCell>
              <HeaderCell />
            </HeaderRow>
            <DataRow>
              <DataCell>
                <AdminIcon size={9} />
                admin
              </DataCell>
              <DataCell $gap={8}>
                <Clock size={9} strokeWidth={1.4} />
                Never
              </DataCell>
              <DataCell $pad={4}>Multi-Domain Super User</DataCell>
              <DataCell $pad={4}>OS Password</DataCell>
              <DataCell />
              <DataCell />
            </DataRow>
          </TablePane>
          <DetailPane>
            <PaneMenu>▾</PaneMenu>
            <DetailHead>
              <AdminIcon size={14} />
              admin
            </DetailHead>
            <DetailGrid>
              <DetailMuted>Authentication Method:</DetailMuted>
              <DetailValue>OS Password</DetailValue>
              <span />
              <span />
              <DetailMuted>Expire At:</DetailMuted>
              <DetailValue>
                <Calendar size={9} />
                Never
              </DetailValue>
              <DetailMuted $sep>Modified on:</DetailMuted>
              <DetailValue>Nov 22, 2019</DetailValue>
            </DetailGrid>
          </DetailPane>
        </Center>

        <FilterSide>
          <ItemCount>1 item</ItemCount>
          <FilterTab>Filters</FilterTab>
          <FilterBody>
            <FilterGroup>
              <MenuCaret $gap={0} />
              Multi-Domain Profiles
            </FilterGroup>
            <FilterItem>
              <Check />
              <ProfileIcon size={10} />
              Multi-Domain... (1)
            </FilterItem>
            <FilterGroup>
              <MenuCaret $gap={0} />
              Authentication Method
            </FilterGroup>
            <FilterItem>
              <Check />
              <Tag size={8} fill="#3a4552" />
              OS Password (1)
            </FilterItem>
          </FilterBody>
        </FilterSide>
      </Workspace>

      <RightStrip>
        <CollapseMark $pad={3} $h={16} $color="#c4ccd3">«</CollapseMark>
        <ValidationTab>Validations</ValidationTab>
      </RightStrip>

      <StatusBar>
        Create Domain: 'NSB1' - Create 'NSB1_Server'
        <Progress>
          <ProgressFill style={{ width: "28%" }} />
        </Progress>
        <UpCaret />
        <StatusMid>
          <CrownIcon size={11} color="#c4ccd3" />
          MDS
          <BarDivider $mx={3} />
          <DbIcon />
          <IpText>192.168.210.72</IpText>
        </StatusMid>
        <StatusRight>
          No changes
          <BarDivider $h={11} $mx={5} />
          admin
        </StatusRight>
      </StatusBar>

      <Taskbar>
        {taskApps.map((app, i) => (
          <TaskSlot key={i} $running={app.running}>
            {app.icon}
          </TaskSlot>
        ))}
        <Tray>
          <PeopleSlot>
            <User size={11} />
          </PeopleSlot>
          <ChevronUp size={11} />
          <Volume2 size={11} />
          <NetTrayIcon />
          <EngLabel>ENG</EngLabel>
          <ClockText>
            <span>23:27</span>
            <span>22.11.2019</span>
          </ClockText>
          <MessageSquare size={12} />
        </Tray>
      </Taskbar>

      <Dialog>
        <DialogTitle>
          New Administrator
          <TitleIcons>
            <Search size={10} strokeWidth={2.8} />
            <FaQuestionCircle size={9} />
            <BarDivider $h={12} $mx={0} />
            <X size={10} strokeWidth={3} />
          </TitleIcons>
        </DialogTitle>
        <DialogHead>
          <AdminIcon size={28} />
          <AvatarCaret>
            <MenuCaret $gap={0} />
          </AvatarCaret>
          <HeadStar>*</HeadStar>
          <NameBlock>
            <NameInput>Enter Object Name</NameInput>
            <CommentInput>Enter Object Comment</CommentInput>
          </NameBlock>
        </DialogHead>
        <DialogBody>
          <DialogSide>
            <SideMark $h={17}>«</SideMark>
            <SideTab $selected>General</SideTab>
            <SideTab>Additional Info</SideTab>
          </DialogSide>
          <Form>
            <SectionTitle>Authentication</SectionTitle>
            <FormRow $h={19}>
              <FieldLabel $w={129}>Authentication Method:</FieldLabel>
              <SelectBox $w={99}>
                Check Point Password
                <SelectCaret />
              </SelectBox>
            </FormRow>
            <FormRow $h={18} $indent={21}>
              <FieldLabel $w={114}>
                <Ban size={9} color="#333" strokeWidth={2.4} />
                <span>
                  Password is not defined <Required>*</Required>
                </span>
              </FieldLabel>
              <ActionButton $w={79}>Set New Password...</ActionButton>
            </FormRow>
            <FormRow $h={14}>Certificate Information:</FormRow>
            <FormRow $h={17} $indent={21}>
              <FieldLabel $w={114}>
                <Ban size={9} color="#333" strokeWidth={2.4} />
                Certificate is not defined
              </FieldLabel>
              <ActionButton $w={32}>Create</ActionButton>
            </FormRow>

            <SectionTitle $mt={11}>Permissions</SectionTitle>
            <FormRow $h={19}>
              <FieldLabel $w={129}>Multi-Domain Permission Profile:</FieldLabel>
              <SelectBox $w={132} $open>
                <ProfileIcon size={10} />
                Domain Level Only
                <SelectCaret />
              </SelectBox>
              <EyeSlot>
                <Eye size={10} strokeWidth={2.6} />
              </EyeSlot>
            </FormRow>
            <FormRow $h={16} $indent={20}>
              Permission Profile per Domain
            </FormRow>
            <DomainBox>
              <DomainTools>
                <Plus size={11} strokeWidth={2.2} />
                <X size={10} strokeWidth={2.4} />
              </DomainTools>
              <DomainHeader>Domain</DomainHeader>
              <EmptyHint>Click</EmptyHint>
            </DomainBox>

            <SectionTitle $mt={12}>Expiration</SectionTitle>
            <FormRow $h={15} $indent={7}>
              <Radio $on />
              Never
            </FormRow>
            <FormRow $h={15} $indent={7}>
              <Radio />
              Expire At:
              <DateInput>11/22/2021</DateInput>
              <DateButton>
                <Calendar size={8} />
              </DateButton>
            </FormRow>
            <FormRule />
            <TagRow>
              <Tag size={8} fill="#333" />
              Add Tag
            </TagRow>
          </Form>
        </DialogBody>
        <DialogFoot>
          <OkButton $w={61}>OK</OkButton>
          <ActionButton $w={61}>Cancel</ActionButton>
        </DialogFoot>

        <Dropdown>
          <DropSearch>
            <DropInput>
              <Search size={10} color="#222" strokeWidth={2.6} />
              <TextCaret />
            </DropInput>
            <NewLink>New...</NewLink>
          </DropSearch>
          <DropList>
            <DropRows>
              {profiles.map((name) => (
                <DropRow key={name} $hover={name === "Global Manager"}>
                  <ProfileIcon size={10} />
                  {name}
                </DropRow>
              ))}
            </DropRows>
            <ScrollTrack>
              <ScrollThumb />
            </ScrollTrack>
          </DropList>
          <DropFoot>5 items available</DropFoot>
        </Dropdown>

        <Pointer>
          <CursorIcon />
        </Pointer>

        <Popover>
          <PopControls>
            <PinSideIcon />
            <X size={8} strokeWidth={3} />
          </PopControls>
          <PopHead>
            <ProfileIcon size={24} />
            Global Manager
          </PopHead>
          <PopText>
            Read/Write permissions for Global
            <br />
            Domain, and customized permissions
            <br />
            for specific Domains.
          </PopText>
          <PopTools>
            <Pencil size={8} color="#aaa" />
            <Copy size={9} fill="#333" />
            <MapPin size={9} strokeWidth={2.4} />
            <ClipboardList size={9} />
            <PopChevron>
              <ChevronDown size={12} strokeWidth={2.4} />
            </PopChevron>
          </PopTools>
        </Popover>
      </Dialog>
    </Shell>
  );
}
